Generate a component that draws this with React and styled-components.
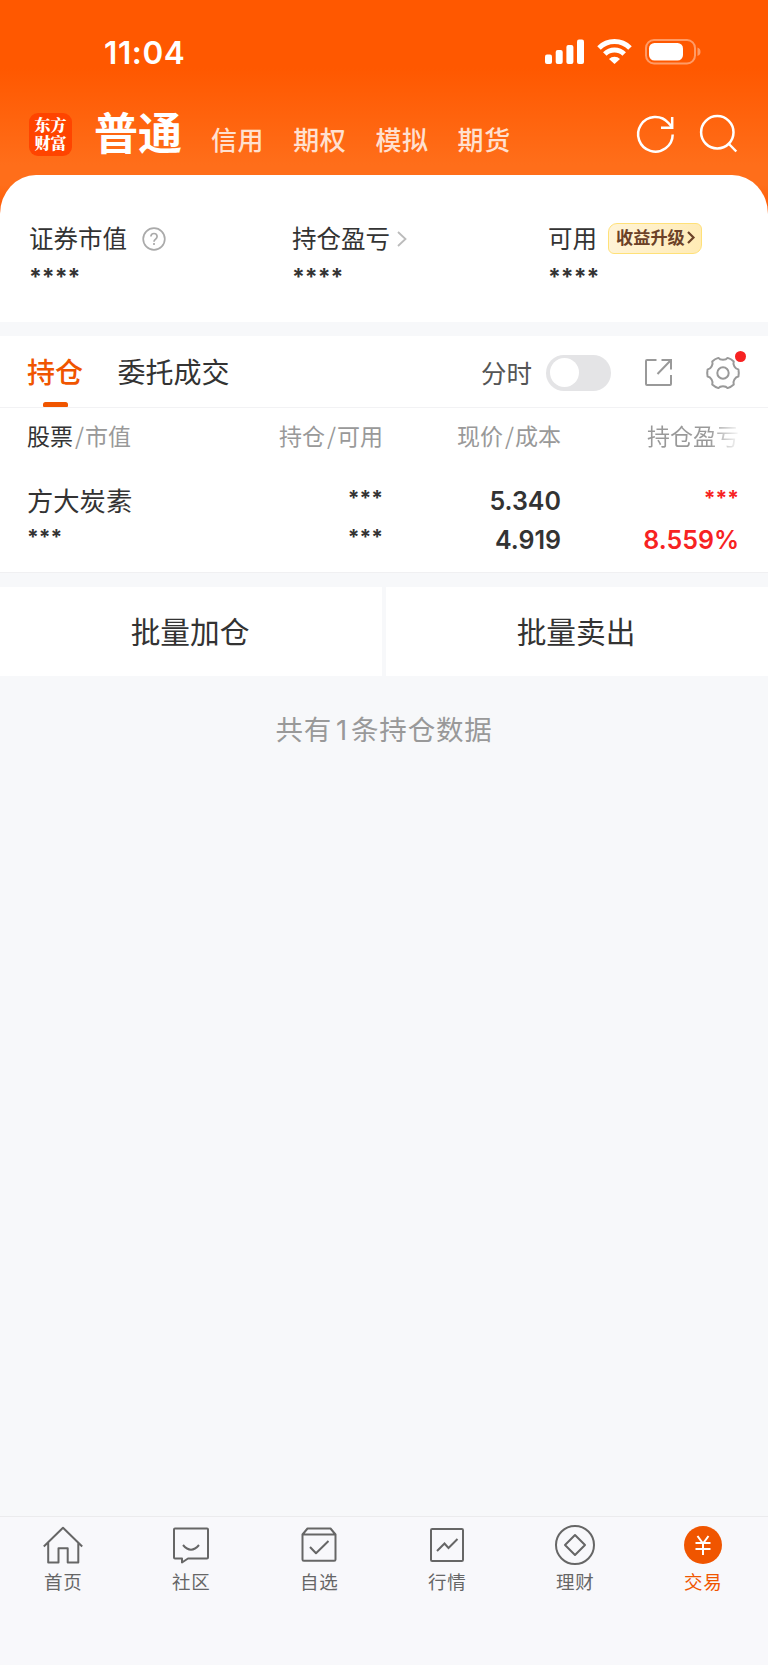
import React from 'react';
import styled, { createGlobalStyle, css } from 'styled-components';

const Global = createGlobalStyle`
  * { box-sizing: border-box; }
  body { margin: 0; background: #f7f8fa; }
  svg { display: block; flex: none; overflow: visible; }
`;
const cjk = `"Noto Sans CJK SC", sans-serif`;
const num = `Inter, "Noto Sans CJK SC", sans-serif`;

const Page = styled.div`
  width: 768px;
  height: 1665px;
  display: flex;
  flex-direction: column;
  font-family: ${cjk};
  color: #333;
  white-space: nowrap;
  background: #f7f8fa;
`;
const Hero = styled.div`
  background: linear-gradient(#ff5800 0, #ff5800 68px, #ff6e1a 165px, #ff6e1a 185px, #ff5800 214px);
`;
const StatusBar = styled.div`
  height: 104px;
  padding: 0 67px 0 104px;
  display: flex;
  justify-content: space-between;
`;
const Clock = styled.div`
  margin-top: 33px;
  font: 600 31.5px/40px ${num};
  letter-spacing: 0.6px;
  color: #fff;
`;
const StatusIcons = styled.div`
  display: flex;
  gap: 13px;
  margin-top: 39px;
`;
const NavBar = styled.div`
  height: 71px;
  padding: 9px 31px 0 29px;
  display: flex;
  align-items: flex-start;
`;
const Logo = styled.div`
  width: 43px;
  height: 43px;
  padding-top: 3px;
  border-radius: 9px;
  background: #ff4400;
  color: #fff;
  font: 900 16px/18px "Noto Serif CJK SC", ${cjk};
  text-align: center;
`;
const MainTab = styled.div`
  margin: -7px 0 0 22px;
  font-size: 44px;
  line-height: 50px;
  font-weight: 700;
  color: #fff;
`;
const SubTabs = styled.div`
  display: flex;
  gap: 29px;
  margin: 6px 0 0 29px;
  flex: 1;
`;
const SubTab = styled.div`
  font-size: 26px;
  line-height: 40px;
  letter-spacing: 0.6px;
  font-weight: 500;
  color: #ffe0d0;
`;
const NavActions = styled.div`
  display: flex;
  gap: 26px;
  margin-top: 2px;
`;
const Summary = styled.div`
  height: 147px;
  padding: 44px 30px 0 29px;
  display: grid;
  grid-template-columns: 263px 256px 1fr;
  background: #fff;
  border-radius: 36px 36px 0 0 / 39px 39px 0 0;
`;
const SummaryLabel = styled.div`
  display: flex;
  align-items: center;
  height: 39px;
  font-size: 24.5px;
  line-height: 36px;
`;
const LabelText = styled.span`
  margin-top: -2px;
`;
const Masked = styled.div`
  padding-top: ${p => p.$drop || 0}px;
  font: 700 ${p => p.$size || 23}px/30px ${num};
  color: ${p => p.$color || '#333'};
`;
const Badge = styled.div`
  display: flex;
  align-items: center;
  gap: 2px;
  width: 94px;
  height: 31px;
  margin: -1px 0 0 11px;
  padding: 0 0 2px 7px;
  border: 1.5px solid #ffe178;
  border-radius: 9px 6px 9px 6px;
  background: linear-gradient(100deg, #fff4d8, #ffebb5);
  color: #6b4127;
  font-size: 17.2px;
  font-weight: 700;
  line-height: 28px;
  svg { margin: 1px 0 0; }
`;
const Panel = styled.div`
  margin-top: 14px;
  background: #fff;
`;
const TabRow = styled.div`
  height: 72px;
  padding: 0 29px 0 27px;
  display: flex;
  border-bottom: 1px solid #f2f2f4;
`;
const Tab = styled.div`
  height: 71px;
  margin-right: 34.5px;
  display: flex;
  flex-direction: column;
  align-items: center;
  justify-content: space-between;
  font-size: 28px;
  line-height: 70px;
  ${p => p.$active && css`
    color: #f05500;
    font-weight: 500;
    &::after {
      content: '';
      width: 25px;
      height: 5px;
      border-radius: 2.5px 2.5px 1px 1px;
      background: #f05500;
      margin-top: -4px;
    }
  `}
`;
const Tools = styled.div`
  margin-left: auto;
  height: 73px;
  display: flex;
  align-items: center;
`;
const ToolLabel = styled.div`
  font-size: 25.5px;
  line-height: 36px;
  color: #555;
  margin: -2px 14px 0 0;
`;
const Switch = styled.div`
  width: 65px;
  height: 36px;
  padding: 3.5px 4px;
  border-radius: 18px;
  background: #e4e4e6;
  margin-right: 34px;
  &::after {
    content: '';
    display: block;
    width: 29px;
    height: 29px;
    border-radius: 50%;
    background: #fff;
  }
`;
const GearButton = styled.div`
  position: relative;
  margin-left: 35px;
`;
const RedDot = styled.i`
  position: absolute;
  top: -6px;
  right: -7px;
  width: 11px;
  height: 11px;
  border-radius: 50%;
  background: #f72222;
`;
const Grid = styled.div`
  display: grid;
  grid-template-columns: 178px 178px 178px 178px;
  padding: 0 29px 0 27px;
`;
const HeadRow = styled(Grid)`
  height: 58px;
  font-size: 23px;
  line-height: 55px;
  color: #999;
`;
const HeadCell = styled.div`
  text-align: ${p => (p.$left ? 'left' : 'right')};
  b { font-weight: 400; color: #333; }
  i { font-style: normal; margin: 0 1px 0 2px; }
  ${p => p.$fade && css`
    background: linear-gradient(90deg, #999 148px, #fff 180px);
    background-clip: text;
    color: transparent;
  `}
`;
const StockRow = styled(Grid)`
  height: 107px;
  padding-top: 16px;
  border-bottom: 1px solid #f0f0f2;
`;
const Cell = styled.div`
  display: flex;
  flex-direction: column;
  align-items: ${p => (p.$left ? 'flex-start' : 'flex-end')};
`;
const Line = styled.div`
  height: 39px;
`;
const StockName = styled.div`
  font-size: 26.3px;
  line-height: 36px;
`;
const Price = styled.div`
  font: 600 25px/39px ${num};
  color: ${p => p.$color || '#333'};
`;
const Actions = styled.div`
  display: grid;
  grid-template-columns: 1fr 1fr;
  gap: 4px;
  margin-top: 14px;
`;
const Action = styled.div`
  height: 89px;
  padding-right: 2px;
  background: #fff;
  text-align: center;
  font-size: 29.7px;
  line-height: 88px;
`;
const Count = styled.div`
  margin-top: 30px;
  flex: 1;
  text-align: center;
  font: 400 27.5px/44px ${cjk};
  letter-spacing: 0.8px;
  color: #999;
  b { font-family: Inter, sans-serif; font-weight: 400; margin: 0 3px 0 4px; }
`;
const BottomNav = styled.div`
  height: 149px;
  display: grid;
  grid-template-columns: repeat(6, 1fr);
  border-top: 1px solid #ebebed;
  background: #f8f8fb;
`;
const NavItem = styled.div`
  display: flex;
  flex-direction: column;
  align-items: center;
  padding: 7px 1.500px 0 0;
  font-size: 18.5px;
  line-height: 28px;
  letter-spacing: 0.8px;
  color: ${p => (p.$active ? '#f05500' : '#666')};
  svg { margin-bottom: 1px; }
`;

const Icon = ({ w = 40, h = w, sw = 2, color = 'currentColor', children }) => (
  <svg width={w} height={h} viewBox={`0 0 ${w} ${h}`} fill="none" stroke={color} strokeWidth={sw}>{children}</svg>
);

// Six rounded teeth, evenly spaced round the centre of a 32px box.
const polar = (r, deg) => {
  const a = (deg * Math.PI) / 180;
  return `${(16 + r * Math.cos(a)).toFixed(2)} ${(16 + r * Math.sin(a)).toFixed(2)}`;
};
const GEAR = [0, 60, 120, 180, 240, 300].reduce(
  (d, a) => `${d}Q${polar(16.2, a)} ${polar(15.8, a + 13)}C${polar(12.8, a + 18)} ${polar(12.8, a + 42)} ${polar(15.8, a + 47)}`,
  `M${polar(15.8, -13)}`,
) + 'Z';

const NAV = [
  ['首页', <path d="M.8 22.500 20 3.800l19.200 18.700M5.200 18.500v20h10.300V24.300h9.200v14.200h10.600v-20" strokeLinejoin="round" />],
  ['社区', <path d="M4 4.500h32q1 0 1 1v28q0 1-1 1H17L11 38.500v-4H4q-1 0-1-1v-28q0-1 1-1zM12 21q8 9.500 16 0" strokeLinejoin="round" />],
  ['自选', <path d="M3.500 10.500v25q0 1.300 1.300 1.300h30.400q1.300 0 1.300-1.300v-25l-5-6h-23zM3.500 10.500h33M11 23l6 6.300L29.500 17" strokeLinejoin="round" />],
  ['行情', <><rect x="4" y="5" width="32" height="32" rx="1.200" /><path d="m10 27 7.500-7.500 4 4.500 9-9" /></>],
  ['理财', <><circle cx="20" cy="21" r="19" /><path d="m20 11 10 10-10 10-10-10z" strokeLinejoin="round" /></>],
  ['交易', <><circle cx="20" cy="21" r="19" fill="#f05500" stroke="none" /><path d="m14.500 12 5.500 7.500 5.500-7.500M20 19v12M12.500 19h15M12.500 25h15" stroke="#fff" /></>],
];

export default function App() {
  return (
    <Page>
      <Global />
      <Hero>
        <StatusBar>
          <Clock>11:04</Clock>
          <StatusIcons>
            <svg width="39" height="25" fill="#fff">
              <rect y="15.500" width="7" height="9.500" rx="2" />
              <rect x="10.700" y="11" width="7" height="14" rx="2" />
              <rect x="21.400" y="6" width="7" height="19" rx="2" />
              <rect x="32" y="0.500" width="7" height="24.500" rx="2" />
            </svg>
            <svg width="35" height="25" fill="none" stroke="#fff" strokeWidth="5">
              <path d="M2 9a22 22 0 0 1 31 0" />
              <path d="M7.800 15a13.800 13.800 0 0 1 19.400 0" />
              <path d="M12 20a7.700 7.700 0 0 1 11 0L17.500 25z" fill="#fff" stroke="none" />
            </svg>
            <svg width="56" height="25" fill="none">
              <rect x="1" y="1" width="49" height="23.500" rx="8" stroke="#ff9b66" strokeWidth="2" />
              <rect x="4" y="4" width="34" height="17.500" rx="5.500" fill="#fff" />
              <path d="M52.500 8.500q3 1 3 4.200t-3 4.200z" fill="#ff9b66" />
            </svg>
          </StatusIcons>
        </StatusBar>
        <NavBar>
          <Logo>东方<br />财富</Logo>
          <MainTab>普通</MainTab>
          <SubTabs>
            {['信用', '期权', '模拟', '期货'].map(t => <SubTab key={t}>{t}</SubTab>)}
          </SubTabs>
          <NavActions>
            <Icon w={37} h={38} sw={2.500} color="#fff">
              <path d="M35.700 19.500A17.300 17.300 0 1 1 31.500 8L35 12M35.200 2v10.700H24" />
            </Icon>
            <Icon w={37} h={38} sw={2.500} color="#fff">
              <circle cx="17.300" cy="17.300" r="16.200" />
              <path d="m28.500 28.500 7.800 8" />
            </Icon>
          </NavActions>
        </NavBar>
        <Summary>
          <div>
            <SummaryLabel>
              <LabelText>证券市值</LabelText>
              <svg width="24" height="24" style={{ marginLeft: 14.5 }} fill="none" stroke="#aaa" strokeWidth="1.700">
                <circle cx="12" cy="12" r="10.800" />
                <path d="M8.900 9.500Q9 6.500 12 6.500t3.100 3q0 1.500-1.600 2.700-1.500 1-1.500 2.500M12 16v2" />
              </svg>
            </SummaryLabel>
            <Masked $drop={4}>****</Masked>
          </div>
          <div>
            <SummaryLabel>
              <LabelText>持仓盈亏</LabelText>
              <svg width="10" height="16" style={{ marginLeft: 7 }} fill="none" stroke="#bbb" strokeWidth="1.800"><path d="m1 1 7.500 7L1 15" /></svg>
            </SummaryLabel>
            <Masked $drop={4}>****</Masked>
          </div>
          <div>
            <SummaryLabel>
              <LabelText>可用</LabelText>
              <Badge>收益升级<svg width="8" height="13" fill="none" stroke="#6b4127" strokeWidth="2.200"><path d="m1 1 5.500 5.500L1 12" /></svg></Badge>
            </SummaryLabel>
            <Masked $drop={4}>****</Masked>
          </div>
        </Summary>
      </Hero>
      <Panel>
        <TabRow>
          <Tab $active>持仓</Tab>
          <Tab>委托成交</Tab>
          <Tools>
            <ToolLabel>分时</ToolLabel>
            <Switch />
            <Icon w={27} sw={2} color="#999">
              <path d="M11.500 1H2q-1 0-1 1v23q0 1 1 1h23q1 0 1-1v-9M16.500 1H26v9.500M26 1 12.500 15" />
            </Icon>
            <GearButton>
              <Icon w={32} sw={2} color="#999">
                <path d={GEAR} strokeLinejoin="round" />
                <circle cx="16" cy="16" r="5.700" />
              </Icon>
              <RedDot />
            </GearButton>
          </Tools>
        </TabRow>
        <HeadRow>
          <HeadCell $left><b>股票</b><i>/</i>市值</HeadCell>
          <HeadCell>持仓<i>/</i>可用</HeadCell>
          <HeadCell>现价<i>/</i>成本</HeadCell>
          <HeadCell $fade>持仓盈亏</HeadCell>
        </HeadRow>
        <StockRow>
          <Cell $left>
            <Line><StockName>方大炭素</StockName></Line>
            <Line><Masked $size={21} $drop={2}>***</Masked></Line>
          </Cell>
          <Cell>
            <Line><Masked $size={21} $drop={2}>***</Masked></Line>
            <Line><Masked $size={21} $drop={2}>***</Masked></Line>
          </Cell>
          <Cell>
            <Line><Price>5.340</Price></Line>
            <Line><Price>4.919</Price></Line>
          </Cell>
          <Cell>
            <Line><Masked $size={21} $drop={2} $color="#f72222">***</Masked></Line>
            <Line><Price $color="#f72222">8.559%</Price></Line>
          </Cell>
        </StockRow>
      </Panel>
      <Actions>
        <Action>批量加仓</Action>
        <Action>批量卖出</Action>
      </Actions>
      <Count>共有<b>1</b>条持仓数据</Count>
      <BottomNav>
        {NAV.map(([label, icon], i) => (
          <NavItem key={label} $active={i === 5}>
            <Icon w={40} h={42}>{icon}</Icon>
            {label}
          </NavItem>
        ))}
      </BottomNav>
    </Page>
  );
}
